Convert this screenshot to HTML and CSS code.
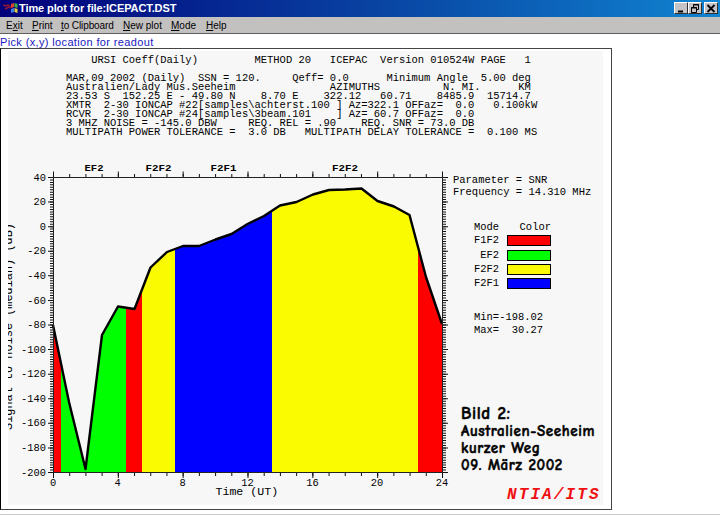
FILE: index.html
```html
<!DOCTYPE html>
<html lang="en">
<head>
    <meta charset="UTF-8">
    <title>Time plot for file:ICEPACT.DST</title>
    <link rel="stylesheet" href="styles.css">
</head>
<body>
    <header class="titlebar">
        <svg class="app-icon" width="16" height="14" viewBox="0 0 16 14">
            <path d="M0 4l3 1 2-1 3 3M2 8l4-2" stroke="#901838" stroke-width="1.6" fill="none"/>
            <path d="M8 3l3-1v4l-3 1z" fill="#e04030"/>
            <path d="M11.500 2l3 1v4l-3-1z" fill="#40b040"/>
            <path d="M8 8l3-1v4l-3 1z" fill="#4080e0"/>
            <path d="M11.500 7l3 1v4l-3-1z" fill="#e0d040"/>
        </svg>
        <h1>Time plot for file:ICEPACT.DST</h1>
        <div class="buttons">
            <button><svg width="10" height="9"><path d="M2 7.5h5" stroke="#000" stroke-width="2"/></svg></button>
            <button><svg width="10" height="9"><path d="M3.5 3V.5h5v5H6M3 1h6M1.5 3.5h5v5h-5zM1 4h6" stroke="#000" fill="none"/></svg></button>
            <button class="close"><svg width="10" height="9"><path d="M1.5 1l7 7M8.500 1l-7 7" stroke="#000" stroke-width="1.8"/></svg></button>
        </div>
    </header>
    <nav class="menu">
        <span class="exit">E<u>x</u>it</span>
        <span class="print"><u>P</u>rint</span>
        <span class="clip"><u>t</u>o Clipboard</span>
        <span class="new"><u>N</u>ew plot</span>
        <span class="mode"><u>M</u>ode</span>
        <span class="help"><u>H</u>elp</span>
    </nav>
    <p class="status">Pick (x,y) location for readout</p>

    <main class="page">
        <div class="paper">
<pre class="report">
    URSI Coeff(Daily)         METHOD 20   ICEPAC  Version 010524W PAGE   1

MAR,09 2002 (Daily)  SSN = 120.     Qeff= 0.0      Minimum Angle  5.00 deg
Australien/Lady Mus.Seeheim               AZIMUTHS          N. MI.      KM
23.53 S  152.25 E - 49.80 N    8.70 E    322.12   60.71    8485.9  15714.7
XMTR  2-30 IONCAP #22[samples\achterst.100 ] Az=322.1 OFFaz=  0.0   0.100kW
RCVR  2-30 IONCAP #24[samples\3beam.101    ] Az= 60.7 OFFaz=  0.0
3 MHZ NOISE = -145.0 DBW     REQ. REL = .90    REQ. SNR = 73.0 DB
MULTIPATH POWER TOLERANCE =  3.0 DB   MULTIPATH DELAY TOLERANCE =  0.100 MS
</pre>
            <div class="content">
                <svg class="plot" width="443" height="355" viewBox="8 150 443 355">
                    <defs>
                        <clipPath id="under">
                            <path d="M53 325L69 402 85.500 469 102 335 118 306.500 134.500 309 150.500 267.500 167 252 183 246 199 246 215.500 239.500 231.500 234 247.500 224 264 216 280 205.500 296.500 202 313 194.500 329 190 345 189.500 361.500 188.500 377.500 201 394 206.500 409.500 215 426 277 442 324V472H53z"/>
                        </clipPath>
                    </defs>

                    <!-- mode areas -->
                    <g clip-path="url(#under)">
                        <rect x="53" y="180" width="8" height="292" fill="#f00"/>
                        <rect x="61" y="180" width="65" height="292" fill="#0f0"/>
                        <rect x="126" y="180" width="16" height="292" fill="#f00"/>
                        <rect x="142" y="180" width="33" height="292" fill="#fafa00"/>
                        <rect x="175" y="180" width="97" height="292" fill="#00f"/>
                        <rect x="272" y="180" width="146" height="292" fill="#fafa00"/>
                        <rect x="418" y="180" width="25" height="292" fill="#f00"/>
                    </g>
                    <path class="curve" d="M53 325L69 402 85.500 469 102 335 118 306.500 134.500 309 150.500 267.500 167 252 183 246 199 246 215.500 239.500 231.500 234 247.500 224 264 216 280 205.500 296.500 202 313 194.500 329 190 345 189.500 361.500 188.500 377.500 201 394 206.500 409.500 215 426 277 442 324"/>

                    <!-- axes -->
                    <rect class="axis" x="53.500" y="177.500" width="389" height="295"/>
                    <path class="minor-y" d="M51.500 177v296M444.500 177v296"/>
                    <path class="major-y" d="M50.500 177v296M445.500 177v296"/>
                    <path class="minor-x" d="M53 175.500h390M53 474.500h390"/>
                    <path class="major-x" d="M53 174h390M53 475.500h390"/>

                    <g class="y-labels">
                        <text x="46" y="181">40</text>
                        <text x="46" y="205">20</text>
                        <text x="46" y="230">0</text>
                        <text x="46" y="254">-20</text>
                        <text x="46" y="279">-40</text>
                        <text x="46" y="304">-60</text>
                        <text x="46" y="328">-80</text>
                        <text x="46" y="353">-100</text>
                        <text x="46" y="377">-120</text>
                        <text x="46" y="402">-140</text>
                        <text x="46" y="426">-160</text>
                        <text x="46" y="451">-180</text>
                        <text x="46" y="476">-200</text>
                    </g>
                    <g class="x-labels">
                        <text x="53" y="485.500">0</text>
                        <text x="117.500" y="485.500">4</text>
                        <text x="182.500" y="485.500">8</text>
                        <text x="247.500" y="485.500">12</text>
                        <text x="312.500" y="485.500">16</text>
                        <text x="377" y="485.500">20</text>
                        <text x="442" y="485.500">24</text>
                    </g>
                    <g class="modes">
                        <text x="84.500" y="170.500" textLength="19" lengthAdjust="spacingAndGlyphs">EF2</text>
                        <text x="145.500" y="170.500" textLength="26" lengthAdjust="spacingAndGlyphs">F2F2</text>
                        <text x="210.500" y="170.500" textLength="26" lengthAdjust="spacingAndGlyphs">F2F1</text>
                        <text x="332" y="170.500" textLength="26" lengthAdjust="spacingAndGlyphs">F2F2</text>
                    </g>
                    <text class="x-title" x="215.500" y="494.500">Time (UT)</text>
                    <text class="y-title" transform="translate(11.5 430) rotate(-90)">Signal to noise (median) (dB)</text>
                </svg>

                <aside class="side">
                    <p class="params">Parameter = SNR<br>Frequency = 14.310 MHz</p>
                    <div class="legend">
                        <span>Mode</span><span>Color</span>
                        <span>F1F2</span><i class="red"></i>
                        <span>EF2</span><i class="green"></i>
                        <span>F2F2</span><i class="yellow"></i>
                        <span>F2F1</span><i class="blue"></i>
                    </div>
<pre class="range">
Min=-198.02
Max=  30.27
</pre>
                    <div class="caption">
                        <p class="fig">Bild 2:</p>
                        <p>Australien-Seeheim</p>
                        <p>kurzer Weg</p>
                        <p>09. März 2002</p>
                    </div>
                    <p class="brand">NTIA/ITS</p>
                </aside>
            </div>
        </div>
    </main>
    <footer></footer>
</body>
</html>
```
FILE: styles.css
```css
* {
    box-sizing: border-box;
}
body {
    margin: 0;
    width: 720px;
    height: 516px;
    overflow: hidden;
    background: #fff;
    font-family: "Liberation Sans", Arial, sans-serif;
    color: #000;
}
p, h1, pre {
    margin: 0;
}

/* window chrome */
.titlebar {
    display: flex;
    align-items: center;
    height: 17px;
    padding: 0 2px 1px 3px;
    background: linear-gradient(to right, #00007b, #0840a0 50%, #1084d0);
    color: #fff;
}
.titlebar h1 {
    flex: 1;
    font-size: 11px;
    line-height: 16px;
    letter-spacing: -0.1px;
}
.buttons {
    display: flex;
}
.buttons button {
    width: 14px;
    height: 12px;
    padding: 0;
    border: 1px solid;
    border-color: #fff #303030 #303030 #fff;
    background: #c6c3c6;
    line-height: 0;
}
.buttons .close {
    margin-left: 2px;
}
.menu {
    display: flex;
    height: 17px;
    padding-left: 6px;
    background: #c3c0c0;
    border-bottom: 1px solid #606060;
    font-size: 10px;
    line-height: 17px;
    white-space: nowrap;
}
.menu .exit {
    width: 26px;
}
.menu .print {
    width: 29px;
}
.menu .clip {
    width: 62px;
    letter-spacing: -0.1px;
}
.menu .new {
    width: 48px;
}
.menu .mode {
    width: 35px;
}
.status {
    height: 14px;
    color: #2018c0;
    font-size: 11px;
    line-height: 16px;
    letter-spacing: 0.36px;
}

/* plot page */
.page {
    width: 612px;
    height: 462px;
    padding: 2px 8px 4px 7px;
    border: 1px solid #444;
    border-left-color: #000;
}
.paper {
    height: 454px;
    background: #f7f7f7;
}
.report,
.params,
.legend,
.range,
.plot {
    font-family: "Liberation Mono", "Courier New", monospace;
}
.report {
    height: 99px;
    padding: 5px 0 0 58px;
    font-size: 10.48px;
    line-height: 9px;
}
.content {
    display: flex;
}
.plot {
    display: block;
    flex: none;
}

/* svg chart */
.curve {
    fill: none;
    stroke: #000;
    stroke-width: 2.4;
    stroke-linejoin: round;
}
.axis {
    fill: none;
    stroke: #222;
}
.minor-y,
.major-y,
.minor-x,
.major-x {
    stroke: #111;
}
.minor-y {
    stroke-width: 3;
    stroke-dasharray: 1 1.458;
}
.major-y {
    stroke-width: 5;
    stroke-dasharray: 1 23.583;
}
.minor-x {
    stroke-width: 3;
    stroke-dasharray: 1 15.208;
}
.major-x {
    stroke-width: 5;
    stroke-dasharray: 1 63.833;
}
.y-labels,
.x-labels {
    font-size: 10.4px;
}
.y-labels {
    text-anchor: end;
}
.x-labels {
    text-anchor: middle;
}
.modes {
    font-size: 9px;
    font-weight: bold;
}
.x-title {
    font-size: 11.6px;
}
.y-title {
    font-size: 11.9px;
}

/* right column */
.side {
    padding: 24px 0 0 2px;
    width: 153px;
}
.params {
    font-size: 10.48px;
    line-height: 12px;
    white-space: nowrap;
}
.legend {
    display: grid;
    grid-template-columns: 25px 44px;
    grid-template-rows: 10px repeat(4, 11px);
    row-gap: 3.3px;
    column-gap: 8px;
    margin: 24px 0 0 21px;
    font-size: 10.48px;
    line-height: 11px;
    text-align: right;
}
.legend i {
    border: 1px solid #000;
}
.legend .red {
    background: #f00;
}
.legend .green {
    background: #0f0;
}
.legend .yellow {
    background: #fafa00;
}
.legend .blue {
    background: #00f;
}
.range {
    margin: 22px 0 0 21px;
    font-size: 10.48px;
    line-height: 13px;
}
.caption {
    margin: 67px 0 0 8px;
    font-family: "Comic Sans MS", "Comic Neue", "Open Sans", sans-serif;
    font-weight: bold;
    font-size: 15px;
    line-height: 17px;
    letter-spacing: 0.6px;
    white-space: nowrap;
    -webkit-text-stroke: 0.5px #000;
}
.caption .fig {
    font-size: 17px;
    line-height: 19px;
}
.brand {
    margin: 12px 0 0 54px;
    font-family: "Liberation Mono", "Courier New", monospace;
    font-size: 16px;
    line-height: 18px;
    font-weight: bold;
    font-style: italic;
    letter-spacing: 2.1px;
    color: #f01010;
}
footer {
    margin-top: 4px;
    border-top: 1px solid #ccc;
}
```
